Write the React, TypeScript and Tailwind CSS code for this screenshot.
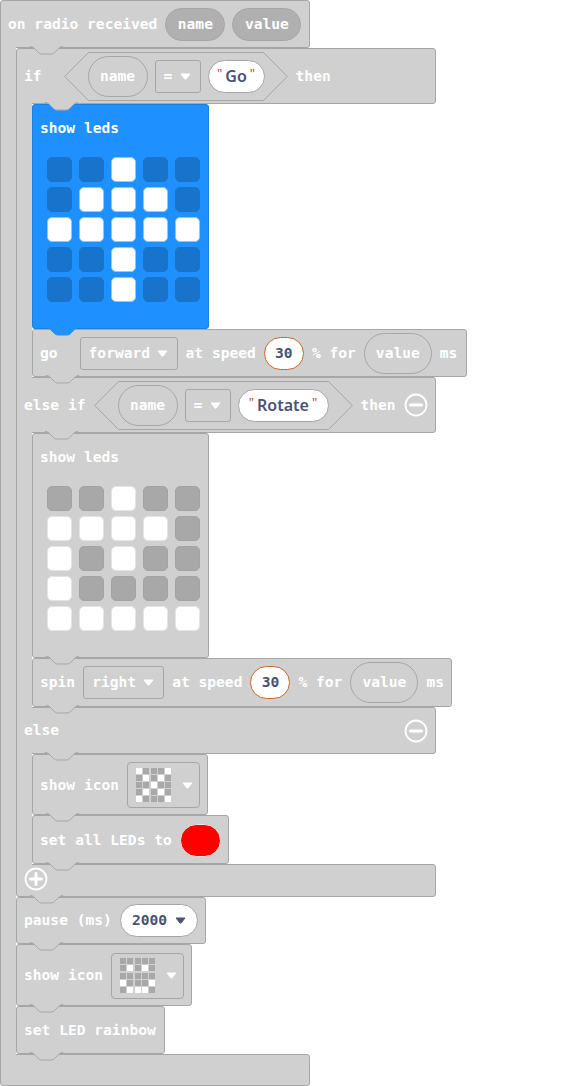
import type { ReactNode } from "react";

const mono = "font-['DejaVu_Sans_Mono',monospace] font-bold text-[14.6px] leading-none whitespace-pre";

const GO_LEDS = ["00100", "01110", "11111", "00100", "00100"];
const ROTATE_LEDS = ["00100", "11110", "10100", "10000", "11111"];
const X_ICON = ["10001", "01010", "00100", "01010", "10001"];
const SMILE_ICON = ["00000", "01010", "00000", "10001", "01110"];

function Label({ children, className = "" }: { children: ReactNode; className?: string }) {
  return <span className={`${mono} text-white ${className}`}>{children}</span>;
}

// the little tab that hangs off the bottom of a block
function Tab({ left, blue }: { left: string; blue?: boolean }) {
  return (
    <svg
      className={`absolute top-full z-10 -mt-px ${left}`}
      width="33"
      height="9"
      viewBox="0 0 33 9"
      fill={blue ? "#1e90ff" : "#d0d0d0"}
      stroke={blue ? "#1e90ff" : "#a6a6a6"}
    >
      <path d="M0 .5c2 0 3 .6 4 1.6l4 4c1 1 2 1.9 4 1.9h9c2 0 3-.9 4-1.9l4-4c1-1 2-1.6 4-1.6" />
    </svg>
  );
}

function Block({
  className,
  children,
  tab = "left-[13px]",
  blue,
}: {
  className: string;
  children?: ReactNode;
  tab?: string;
  blue?: boolean;
}) {
  return (
    <div
      className={`relative box-border shrink-0 rounded-[3px] border ${
        blue ? "border-[#1a7fe0] bg-[#1e90ff]" : "border-[#a6a6a6] bg-[#d0d0d0]"
      } ${className}`}
    >
      {children}
      <Tab left={tab} blue={blue} />
    </div>
  );
}

// left arm of a C shaped block, runs over the rounded corners of the rows it joins
function Spine() {
  return <div className="relative z-[5] -my-[3px] w-[16px] shrink-0 border-l border-[#a6a6a6] bg-[#d0d0d0]" />;
}

function Row({ className = "", children }: { className?: string; children: ReactNode }) {
  return <div className={`flex h-full items-center ${className}`}>{children}</div>;
}

function VarPill({ label, className }: { label: string; className: string }) {
  return (
    <div className={`box-border flex shrink-0 items-center justify-center rounded-full border border-[#a6a6a6] ${className}`}>
      <Label>{label}</Label>
    </div>
  );
}

function Caret({ dark }: { dark?: boolean }) {
  return (
    <svg width="11" height="7" viewBox="0 0 11 7" className="shrink-0">
      <path d="M1 1h9L6 6q-.5.5-1 0z" fill={dark ? "#4b5270" : "#fff"} stroke={dark ? "#4b5270" : "#fff"} strokeLinejoin="round" />
    </svg>
  );
}

function Dropdown({ label, className }: { label: string; className: string }) {
  return (
    <div className={`box-border flex h-[33px] shrink-0 items-center justify-between rounded-[3px] border border-[#a6a6a6] pl-[8px] pr-[9px] ${className}`}>
      <Label>{label}</Label>
      <Caret />
    </div>
  );
}

function Str({ text, className }: { text: string; className: string }) {
  return (
    <div className={`box-border flex h-[33px] shrink-0 items-center justify-center rounded-full border border-[#a6a6a6] bg-white font-['Noto_Sans',sans-serif] text-[16px] font-semibold text-[#4b5270] ${className}`}>
      <span className="mr-[3px] -mt-[5px] text-[13px] font-normal leading-none text-[#b84a4a]">"</span>
      {text}
      <span className="ml-[3px] -mt-[5px] text-[13px] font-normal leading-none text-[#b84a4a]">"</span>
    </div>
  );
}

function Num({ text }: { text: string }) {
  return (
    <div className={`${mono} ml-[8px] box-border flex h-[33px] w-[40px] shrink-0 items-center justify-center rounded-full border border-[#c4682c] bg-white text-[#4b5270]`}>
      {text}
    </div>
  );
}

function Hex({ width, children }: { width: number; children: ReactNode }) {
  return (
    <div className="relative flex h-[49px] shrink-0 items-center pl-[24px]" style={{ width }}>
      <svg className="absolute inset-0" width={width} height="49" fill="none" stroke="#a6a6a6">
        <path d={`M.7 24.5 24.5.5H${width - 24.5}L${width - 0.7} 24.5 ${width - 24.5} 48.5H24.5Z`} />
      </svg>
      <div className="relative flex items-center">{children}</div>
    </div>
  );
}

function RoundButton({ minus }: { minus?: boolean }) {
  return (
    <svg width="24" height="24" viewBox="0 0 24 24" className="shrink-0" fill="none" stroke="#fff">
      <circle cx="12" cy="12" r="10.5" strokeWidth="1.8" />
      <path d={minus ? "M6.5 12h11" : "M6.5 12h11M12 6.5v11"} strokeWidth="3" strokeLinecap="round" />
    </svg>
  );
}

function Leds({ rows, off, on = "border-[#8fc8ff]" }: { rows: string[]; off: string; on?: string }) {
  return (
    <div className="grid w-[153px] grid-cols-5 gap-x-[7px] gap-y-[5px]">
      {rows.join("").split("").map((cell, i) => (
        <div
          key={i}
          className={`box-border h-[25px] w-[25px] rounded-[5px] border ${cell === "1" ? `bg-white ${on}` : off}`}
        />
      ))}
    </div>
  );
}

function ShowLeds({ rows, active }: { rows: string[]; active?: boolean }) {
  return (
    <Block className="h-[225px] w-[177px] pl-[7px] pt-[10px]" blue={active}>
      <Label>show leds</Label>
      <div className="ml-[7px] mt-[18px]">
        {active ? (
          <Leds rows={rows} off="border-[#1873cb] bg-[#1873cb]" />
        ) : (
          <Leds rows={rows} off="border-[#a3a3a3] bg-[#a8a8a8]" on="border-[#e4e4e4]" />
        )}
      </div>
    </Block>
  );
}

function MiniIcon({ rows }: { rows: string[] }) {
  return (
    <div className="grid w-[35px] grid-cols-5 gap-[1.2px]">
      {rows.join("").split("").map((cell, i) => (
        <div key={i} className={`h-[6px] w-[6px] ${cell === "1" ? "bg-white" : "bg-[#a8a8a8]"}`} />
      ))}
    </div>
  );
}

function ShowIcon({ rows, className }: { rows: string[]; className: string }) {
  return (
    <Block className={className}>
      <Row className="pl-[7px] pt-px">
        <Label>show icon</Label>
        <div className="ml-[8px] box-border flex h-[46px] w-[73px] items-center rounded-[4px] border border-[#a6a6a6] pl-[8px]">
          <MiniIcon rows={rows} />
          <span className="ml-[11px]">
            <Caret />
          </span>
        </div>
      </Row>
    </Block>
  );
}

function Compare({ width, value, strClass }: { width: number; value: string; strClass: string }) {
  return (
    <Hex width={width}>
      <VarPill label="name" className="h-[41px] w-[60px]" />
      <Dropdown label="=" className="ml-[7px] w-[46px]" />
      <Str text={value} className={`ml-[7px] ${strClass}`} />
    </Hex>
  );
}

export default function App() {
  return (
    <div className="flex w-[570px] flex-col bg-white">
      {/* on radio received */}
      <Block className="h-[48px] w-[310px]" tab="left-[29px]">
        <Row className="pl-[7px]">
          <Label>on radio received</Label>
          <VarPill label="name" className="ml-[8px] h-[33px] w-[60px] bg-[#b0b0b0]" />
          <VarPill label="value" className="ml-[7px] h-[33px] w-[69px] bg-[#b0b0b0]" />
        </Row>
      </Block>
      <div className="flex">
        <Spine />
        <div className="flex flex-col">
          {/* if */}
          <Block className="h-[56px] w-[420px]" tab="left-[28px]">
            <Row className="pl-[7px]">
              <Label>if</Label>
              <span className="w-[22px]" />
              <Compare width={224} value="Go" strClass="w-[57px]" />
              <Label className="ml-[8px]">then</Label>
            </Row>
          </Block>
          <div className="flex">
            <Spine />
            <div className="flex flex-col">
              <ShowLeds rows={GO_LEDS} active />
              <Block className="h-[48px] w-[435px]">
                <Row className="pl-[7px]">
                  <Label>go</Label>
                  <Dropdown label="forward" className="ml-[22px] w-[98px]" />
                  <Label className="ml-[8px]">at speed</Label>
                  <Num text="30" />
                  <Label className="ml-[8px]">% for</Label>
                  <VarPill label="value" className="ml-[8px] h-[41px] w-[68px]" />
                  <Label className="ml-[8px]">ms</Label>
                </Row>
              </Block>
            </div>
          </div>
          {/* else if */}
          <Block className="h-[56px] w-[420px]" tab="left-[28px]">
            <Row className="pl-[7px]">
              <Label>else if</Label>
              <span className="w-[8px]" />
              <Compare width={259} value="Rotate" strClass="w-[91px]" />
              <Label className="ml-[8px]">then</Label>
              <span className="ml-[8px]">
                <RoundButton minus />
              </span>
            </Row>
          </Block>
          <div className="flex">
            <Spine />
            <div className="flex flex-col">
              <ShowLeds rows={ROTATE_LEDS} />
              <Block className="h-[49px] w-[420px]">
                <Row className="pl-[7px]">
                  <Label>spin</Label>
                  <Dropdown label="right" className="ml-[8px] w-[81px]" />
                  <Label className="ml-[8px]">at speed</Label>
                  <Num text="30" />
                  <Label className="ml-[8px]">% for</Label>
                  <VarPill label="value" className="ml-[8px] h-[41px] w-[68px]" />
                  <Label className="ml-[8px]">ms</Label>
                </Row>
              </Block>
            </div>
          </div>
          {/* else */}
          <Block className="h-[47px] w-[420px]" tab="left-[28px]">
            <Row className="justify-between pl-[7px] pr-[7px]">
              <Label>else</Label>
              <RoundButton minus />
            </Row>
          </Block>
          <div className="flex">
            <Spine />
            <div className="flex flex-col">
              <ShowIcon rows={X_ICON} className="h-[61px] w-[176px]" />
              <Block className="h-[49px] w-[197px]">
                <Row className="pl-[7px] pt-px">
                  <Label>set all LEDs to</Label>
                  <div className="ml-[8px] h-[33px] w-[41px] rounded-full border border-[#e8e8e8] bg-[#ff0000]" />
                </Row>
              </Block>
            </div>
          </div>
          <Block className="h-[33px] w-[420px]">
            <div className="pl-[7px] pt-[2px]">
              <RoundButton />
            </div>
          </Block>
          <Block className="h-[47px] w-[190px]">
            <Row className="pl-[7px]">
              <Label>pause (ms)</Label>
              <div className={`${mono} ml-[8px] box-border flex h-[33px] w-[78px] items-center justify-between rounded-full border border-[#a6a6a6] bg-white pl-[11px] pr-[11px] text-[#4b5270]`}>
                2000
                <Caret dark />
              </div>
            </Row>
          </Block>
          <ShowIcon rows={SMILE_ICON} className="h-[62px] w-[176px]" />
          <Block className="h-[48px] w-[149px]">
            <Row className="pl-[7px]">
              <Label>set LED rainbow</Label>
            </Row>
          </Block>
        </div>
      </div>
      <div className="box-border h-[32px] w-[310px] shrink-0 rounded-[3px] border border-[#a6a6a6] bg-[#d0d0d0]" />
    </div>
  );
}
